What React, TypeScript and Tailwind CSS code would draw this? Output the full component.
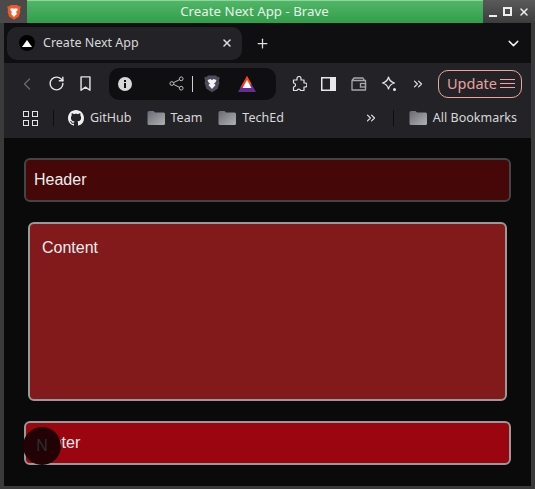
import { ChevronDown, ChevronLeft, ChevronsRight, Plus, RotateCw, X } from "lucide-react";

const ui = "font-['Noto_Sans',sans-serif]";

function BraveLion({ className, fill, face }: { className: string; fill: string; face: string }) {
  return (
    <svg viewBox="0 0 20 22" className={className}>
      <path d="M5 1h10l2 2 2-.5.5 1.500-1 4 .8 2-2.300 7.500L10 22l-7-4.500L.7 10l.8-2-1-4L1 2.500 3 3z" fill={fill} />
      <path d="M4.500 6.500 8 5.500l2 1 2-1 3.500 1-1 3-2 1.500 2 2-4.500 5-4.500-5 2-2-2-1.500z" fill={face} />
    </svg>
  );
}

function Folder() {
  return (
    <svg viewBox="0 0 18 16" className="h-4 w-[18px] shrink-0">
      <defs>
        <linearGradient id="folder" x1="0" y1="0" x2="1" y2="1">
          <stop offset="0" stopColor="#6a6a72" />
          <stop offset="1" stopColor="#b0b0b6" />
        </linearGradient>
      </defs>
      <path d="M.5 2.500A1.500 1.500 0 0 1 2 1h4.500L8 2.500h8.500A1.500 1.500 0 0 1 18 4v9.500a1.500 1.500 0 0 1-1.500 1.500H2a1.500 1.500 0 0 1-1.500-1.500z" fill="url(#folder)" />
    </svg>
  );
}

function Bookmark({ label }: { label: string }) {
  return (
    <div className="flex items-center gap-[6px]">
      <Folder />
      <span>{label}</span>
    </div>
  );
}

export default function App() {
  return (
    <div className="flex h-[489px] w-[535px] flex-col overflow-hidden bg-[#3a3a3a]">
      {/* title bar */}
      <div className="flex h-[23px] shrink-0">
        <div className="flex w-[27px] items-center justify-center bg-[#4a4a4a]">
          <BraveLion className="h-[16px] w-[14px]" fill="#f1582a" face="#fff" />
        </div>
        <div className={`flex flex-1 items-center justify-center border-t border-[#8fd39d] bg-linear-to-b from-[#52b568] to-[#2f9e4a] pr-[1px] text-[13.300px] text-[#e6f3e8] ${ui}`}>
          Create Next App - Brave
        </div>
        <div className="flex w-[52px] items-center justify-center gap-[6px] bg-linear-to-b from-[#5a5a5a] to-[#3c3c3c] text-[#eee]">
          <span className="mt-[9px] h-[2px] w-[8px] bg-[#eee]" />
          <span className="h-[9px] w-[9px] border-2 border-[#eee]" />
          <X size={12} strokeWidth={3} />
        </div>
      </div>

      <div className="flex min-h-0 flex-1 flex-col pb-[3px] pl-[4px] pr-[4px]">
        {/* tab strip */}
        <div className={`flex h-[40px] shrink-0 items-center bg-[#0f0f11] pl-[3px] text-[12.500px] text-[#d8d8da] ${ui}`}>
          <div className="flex h-[33px] w-[235px] items-center rounded-[10px] bg-[#232327] pl-[12px] pr-[9px]">
            <span className="flex h-[16px] w-[16px] items-center justify-center rounded-full bg-black">
              <span className="h-0 w-0 border-x-[5px] border-b-[7px] border-x-transparent border-b-white" />
            </span>
            <span className="ml-[8px] flex-1">Create Next App</span>
            <X size={12} strokeWidth={3} className="text-[#ddd]" />
          </div>
          <Plus size={15} strokeWidth={2} className="ml-[13px] text-[#ddd]" />
          <ChevronDown size={17} strokeWidth={2} className="ml-auto mr-[9px] text-[#eee]" />
        </div>

        {/* toolbar */}
        <div className="flex h-[41px] shrink-0 items-center bg-[#232327] pl-[13px] text-[#e4e4e6]">
          <ChevronLeft size={20} strokeWidth={1.500} className="text-[#6a6a70]" />
          <RotateCw size={17} strokeWidth={2} className="ml-[11px]" />
          <svg viewBox="0 0 14 18" className="ml-[14px] h-[16px] w-[13px]" fill="none" stroke="#e4e4e6" strokeWidth="1.600">
            <path d="M2 1h10v15l-5-3.500L2 16z" strokeLinejoin="round" />
          </svg>
          <div className="ml-[17px] flex h-[32px] w-[167px] shrink-0 items-center rounded-[10px] bg-[#0f0f11] pl-[9px]">
            <svg viewBox="0 0 14 14" className="h-[14px] w-[14px]">
              <circle cx="7" cy="7" r="7" fill="#d8d8da" />
              <rect x="6" y="6" width="2" height="5" fill="#0f0f11" />
              <rect x="6" y="3" width="2" height="2" fill="#0f0f11" />
            </svg>
            <svg viewBox="0 0 16 16" className="ml-[37px] h-[15px] w-[15px]" fill="none" stroke="#c9c9cc" strokeWidth="1">
              <circle cx="3" cy="8" r="2" />
              <circle cx="13" cy="3" r="2" />
              <circle cx="13" cy="13" r="2" />
              <path d="M5 7l6-3M5 9l6 3" />
            </svg>
            <span className="ml-[8px] h-[16px] w-px bg-[#d0d0d2]" />
            <BraveLion className="ml-[11px] h-[19px] w-[16px]" fill="#4b4b5c" face="#f2f2f4" />
            <svg viewBox="0 0 18 16" className="ml-[18px] h-[16px] w-[18px]">
              <path d="M9 0 18 16H0z" fill="#662d91" />
              <path d="M9 0 13.500 8 9 12 4.500 8z" fill="#ff5000" />
              <path d="M9 0 5.800 5.700 2 12 9 8z" fill="#f0371c" />
              <path d="M9 4 13.500 12H4.500z" fill="#fff" />
            </svg>
          </div>
          <svg viewBox="0 0 16 16" className="ml-[15px] h-[16px] w-[16px]" fill="none" stroke="#e4e4e6" strokeWidth="1.200">
            <path d="M6 2.500a2 2 0 0 1 4 0V4h3v3h1a2 2 0 0 1 0 4h-1v3.500H9.500a1.800 1.800 0 0 0-3.500 0H2.500V11a2 2 0 0 0 0-4V4H6z" strokeLinejoin="round" />
          </svg>
          <svg viewBox="0 0 15 14" className="ml-[14px] h-[14px] w-[15px]">
            <rect x=".75" y=".75" width="13.500" height="12.500" fill="#232327" stroke="#e8e8ea" strokeWidth="1.500" />
            <rect x="9" y="1" width="5" height="12" fill="#e8e8ea" />
          </svg>
          <svg viewBox="0 0 16 14" className="ml-[15px] h-[14px] w-[16px]" fill="none" stroke="#a8a8ac" strokeWidth="1.300">
            <path d="M1 3.500h13.500v9.500H1zM1 3.500 3 1h9l1.500 2.500" strokeLinejoin="round" />
            <rect x="9.500" y="6.500" width="5" height="3.500" />
          </svg>
          <svg viewBox="0 0 16 16" className="ml-[14px] h-[16px] w-[16px]" fill="none" stroke="#e4e4e6" strokeWidth="1.200">
            <path d="M7.500 1c.8 3.400 2.200 5 6 6-3.800 1-5.200 2.600-6 6-.8-3.400-2.200-5-6-6 3.800-1 5.200-2.600 6-6z" strokeLinejoin="round" />
            <circle cx="13.500" cy="13.500" r="1.500" fill="#e4e4e6" stroke="none" />
          </svg>
          <ChevronsRight size={14} strokeWidth={2} className="ml-[14px]" />
          <div className={`ml-[13px] flex h-[28px] w-[84px] items-center rounded-[10px] border border-[#f0a3a0] pl-[8px] text-[14.500px] text-[#e8a09e] ${ui}`}>
            <span>Update</span>
            <span className="ml-[3px] flex w-[15px] flex-col gap-[3px]">
              <span className="h-px bg-[#f0a3a0]" />
              <span className="h-px bg-[#f0a3a0]" />
              <span className="h-px bg-[#f0a3a0]" />
            </span>
          </div>
        </div>

        {/* bookmarks */}
        <div className={`flex h-[34px] shrink-0 items-center bg-[#232327] pb-[6px] pl-[19px] text-[12.500px] text-[#d8d8da] ${ui}`}>
          <div className="grid grid-cols-2 gap-[3px]">
            <span className="h-[6px] w-[6px] border border-[#e4e4e6]" />
            <span className="h-[6px] w-[6px] border border-[#e4e4e6]" />
            <span className="h-[6px] w-[6px] border border-[#e4e4e6]" />
            <span className="h-[6px] w-[6px] border border-[#e4e4e6]" />
          </div>
          <span className="ml-[15px] h-[16px] w-px bg-[#0f0f11]" />
          <svg viewBox="0 0 16 16" className="ml-[14px] h-[16px] w-[16px]" fill="#f0f0f2">
            <path d="M8 0C3.580 0 0 3.580 0 8c0 3.540 2.290 6.530 5.470 7.590.4.070.55-.170.55-.380 0-.190-.010-.820-.010-1.490-2.010.370-2.530-.490-2.690-.940-.090-.230-.480-.940-.820-1.130-.280-.150-.680-.520-.010-.530.630-.010 1.080.580 1.230.820.720 1.210 1.870.870 2.330.660.070-.520.280-.870.510-1.070-1.780-.200-3.640-.890-3.640-3.950 0-.870.310-1.590.820-2.150-.080-.200-.360-1.020.080-2.120 0 0 .670-.210 2.200.820.640-.180 1.320-.270 2-.270s1.360.090 2 .270c1.530-1.040 2.200-.820 2.200-.820.440 1.100.160 1.920.080 2.120.510.560.820 1.270.820 2.150 0 3.070-1.870 3.750-3.650 3.950.290.250.540.730.540 1.480 0 1.070-.010 1.930-.010 2.200 0 .210.150.460.550.380A8.010 8.010 0 0 0 16 8c0-4.420-3.580-8-8-8z" />
          </svg>
          <span className="ml-[6px]">GitHub</span>
          <div className="ml-[15px]"><Bookmark label="Team" /></div>
          <div className="ml-[16px]"><Bookmark label="TechEd" /></div>
          <ChevronsRight size={14} strokeWidth={2} className="ml-[80px] text-[#e4e4e6]" />
          <span className="ml-[15px] h-[16px] w-px bg-[#0f0f11]" />
          <div className="ml-[15px]"><Bookmark label="All Bookmarks" /></div>
        </div>

        {/* page */}
        <div className="relative flex min-h-0 flex-1 flex-col bg-[#0a0a0a] px-[20px] pt-[20px] font-['Liberation_Sans',sans-serif] text-[16px] text-[#ededed]">
          <div className="flex h-[44px] shrink-0 items-center rounded-[6px] border-2 border-[#444] bg-[#460709] px-[8px]">
            Header
          </div>
          <div className="mx-[4px] mt-[20px] h-[179px] shrink-0 rounded-[6px] border-2 border-[#999] bg-[#821a1b] px-[12px] py-[12px]">
            Content
          </div>
          <div className="mt-[20px] flex h-[44px] shrink-0 items-center rounded-[6px] border-2 border-[#999] bg-[#9b0510] px-[8px]">
            Footer
          </div>
          {/* next dev indicator */}
          <div className="absolute left-[19px] top-[289px] flex h-[38px] w-[38px] items-center justify-center rounded-full bg-[#220205] text-[16px] text-[#2e2e2e]">
            N
          </div>
        </div>
      </div>
    </div>
  );
}
